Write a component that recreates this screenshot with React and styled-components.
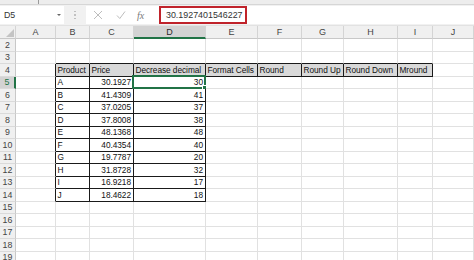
import React from 'react';
import styled, { createGlobalStyle } from 'styled-components';

const GlobalStyle = createGlobalStyle`
  html, body {
    margin: 0;
    padding: 0;
    background: #ffffff;
    overflow: hidden;
  }
  body {
    font-family: "Liberation Sans", Arial, sans-serif;
  }
`;

const COLS = ['A', 'B', 'C', 'D', 'E', 'F', 'G', 'H', 'I', 'J'];
const HEADERS = ['Product', 'Price', 'Decrease decimal', 'Format Cells', 'Round', 'Round Up', 'Round Down', 'Mround'];
const DATA = [
    ['A', '30.1927', '30'],
    ['B', '41.4309', '41'],
    ['C', '37.0205', '37'],
    ['D', '37.8008', '38'],
    ['E', '48.1368', '48'],
    ['F', '40.4354', '40'],
    ['G', '19.7787', '20'],
    ['H', '31.8728', '32'],
    ['I', '16.9218', '17'],
    ['J', '18.4622', '18'],
];

const GREEN = '#217346';

const Sheet = styled.div`
  width: 474px;
  height: 260px;
  display: flex;
  flex-direction: column;
  overflow: hidden;
  background: #ffffff;
`;

const Ribbon = styled.div`
  height: 6px;
  background: #ededed;
  border-bottom: 1px solid #d6d6d6;
  display: flex;
`;

const RibbonTick = styled.div`
  width: 1px;
  height: 4px;
  margin-left: 38px;
  background: #9a9a9a;
`;

const FormulaBar = styled.div`
  height: 21px;
  padding: 1px 0 1px 0;
  display: flex;
  align-items: stretch;
  background: #f1f1f1;
  border-bottom: 1px solid #e2e2e2;
`;

const NameBox = styled.div`
  width: 64px;
  background: #ffffff;
  display: flex;
  align-items: center;
  justify-content: space-between;
  padding: 0 3px 0 4px;
  box-sizing: border-box;
  font-size: 8.8px;
  color: #333;
`;

const Caret = styled.span`
  width: 0;
  height: 0;
  border-left: 2px solid transparent;
  border-right: 2px solid transparent;
  border-top: 2px solid #666;
`;

const Dots = styled.div`
  width: 22px;
  display: flex;
  flex-direction: column;
  align-items: center;
  justify-content: center;
  gap: 2px;
  span {
    width: 1.5px;
    height: 1.5px;
    border-radius: 50%;
    background: #b8b8b8;
  }
`;

const ActionBox = styled.div`
  width: 73px;
  background: #ffffff;
  display: flex;
  align-items: center;
  padding-left: 7px;
  box-sizing: border-box;
  gap: 13px;
`;

const Fx = styled.span`
  font-family: "Liberation Serif", "Times New Roman", serif;
  font-style: italic;
  font-size: 10px;
  color: #7a7a7a;
  margin-left: -2px;
`;

const FormulaInput = styled.div`
  flex: 1;
  background: #ffffff;
  display: flex;
  align-items: center;
`;

const FormulaValue = styled.div`
  height: 18px;
  width: 88px;
  box-sizing: border-box;
  border: 2px solid #c0232b;
  display: flex;
  align-items: center;
  padding-left: 5px;
  font-size: 8.9px;
  color: #333;
`;

const GapBar = styled.div`
  height: 2px;
  background: #f7f7f7;
`;

const Grid = styled.div`
  display: grid;
  grid-template-columns: 16px 40px 34px 44px 72px 52px 44px 42px 54px 35px 1fr;
  grid-template-rows: 13px;
  grid-auto-rows: 12.5px;
`;

const Corner = styled.div`
  background: #f0f0f0;
  border-right: 1px solid #d4d4d4;
  border-bottom: 1px solid #c8c8c8;
  box-sizing: border-box;
  display: flex;
  align-items: flex-end;
  justify-content: flex-end;
  padding: 0 1px 1px 0;
  span {
    width: 0;
    height: 0;
    border-left: 8px solid transparent;
    border-bottom: 8px solid #c4c4c4;
  }
`;

const ColHead = styled.div`
  background: ${p => (p.$active ? '#d3d3d3' : '#f0f0f0')};
  border-right: 1px solid #d4d4d4;
  border-bottom: ${p => (p.$active ? `2px solid ${GREEN}` : '1px solid #c8c8c8')};
  box-sizing: border-box;
  font-size: 9px;
  color: ${p => (p.$active ? '#2b2b2b' : '#444')};
  display: flex;
  align-items: center;
  justify-content: center;
  padding-top: ${p => (p.$active ? '1px' : '0')};
`;

const RowHead = styled.div`
  background: ${p => (p.$active ? '#d3d3d3' : '#f0f0f0')};
  border-right: ${p => (p.$active ? `2px solid ${GREEN}` : '1px solid #c8c8c8')};
  border-bottom: 1px solid #dadada;
  box-sizing: border-box;
  font-size: 8.8px;
  color: ${p => (p.$active ? GREEN : '#444')};
  display: flex;
  align-items: center;
  justify-content: center;
`;

const Cell = styled.div`
  position: relative;
  box-sizing: border-box;
  border-right: 1px solid ${p => (p.$darkRight ? '#1a1a1a' : '#e1e1e1')};
  border-bottom: 1px solid ${p => (p.$darkBottom ? '#1a1a1a' : '#e1e1e1')};
  background: ${p => (p.$fill ? '#d9d9d9' : '#ffffff')};
  font-size: 8.3px;
  letter-spacing: -0.05px;
  color: #111;
  display: flex;
  align-items: center;
  justify-content: ${p => (p.$right ? 'flex-end' : 'flex-start')};
  padding: 0 2px 0 1.5px;
  white-space: nowrap;
`;

const Selection = styled.div`
  position: absolute;
  left: -2px;
  top: -2px;
  right: -1px;
  bottom: -1px;
  border: 2px solid ${GREEN};
  pointer-events: none;
  &::after {
    content: '';
    position: absolute;
    right: -4px;
    bottom: -4px;
    width: 4px;
    height: 4px;
    background: ${GREEN};
    border: 1px solid #fff;
  }
`;

const inTable = (r, c) =>
    (r === 4 && c >= 1 && c <= 8) || (r >= 5 && r <= 14 && c >= 1 && c <= 3);

const cellContent = (r, c) => {
    if (r === 4 && c >= 1 && c <= 8) return { text: HEADERS[c - 1], right: false };
    if (r >= 5 && r <= 14 && c >= 1 && c <= 3) {
        const v = DATA[r - 5][c - 1];
        return { text: v, right: c > 1 };
    }
    return { text: '', right: false };
};

const CancelIcon = () => (
    <svg width="10" height="10" viewBox="0 0 10 10">
        <path d="M1 1 L9 9 M9 1 L1 9" stroke="#bdbdbd" strokeWidth="1" fill="none" />
    </svg>
);

const CheckIcon = () => (
    <svg width="10" height="10" viewBox="0 0 10 10">
        <path d="M1 5.5 L3.8 8.5 L9 1.5" stroke="#bdbdbd" strokeWidth="1" fill="none" />
    </svg>
);

export default function App() {
    const rows = [];
    for (let r = 2; r <= 19; r++) rows.push(r);

    return (
        <>
            <GlobalStyle />
            <Sheet>
                <Ribbon>
                    <RibbonTick />
                </Ribbon>
                <FormulaBar>
                    <NameBox>
                        D5
                        <Caret />
                    </NameBox>
                    <Dots>
                        <span />
                        <span />
                        <span />
                    </Dots>
                    <ActionBox>
                        <CancelIcon />
                        <CheckIcon />
                        <Fx>fx</Fx>
                    </ActionBox>
                    <FormulaInput>
                        <FormulaValue>30.1927401546227</FormulaValue>
                    </FormulaInput>
                </FormulaBar>
                <GapBar />
                <Grid>
                    <Corner>
                        <span />
                    </Corner>
                    {COLS.map(col => (
                        <ColHead key={col} $active={col === 'D'}>{col}</ColHead>
                    ))}
                    {rows.map(r => (
                        <React.Fragment key={r}>
                            <RowHead $active={r === 5}>{r}</RowHead>
                            {COLS.map((col, c) => {
                                const { text, right } = cellContent(r, c);
                                return (
                                    <Cell
                                        key={col}
                                        $darkRight={inTable(r, c) || inTable(r, c + 1)}
                                        $darkBottom={inTable(r, c) || inTable(r + 1, c)}
                                        $fill={r === 4 && inTable(r, c)}
                                        $right={right}
                                    >
                                        {text}
                                        {r === 5 && col === 'D' && <Selection />}
                                    </Cell>
                                );
                            })}
                        </React.Fragment>
                    ))}
                </Grid>
            </Sheet>
        </>
    );
}
